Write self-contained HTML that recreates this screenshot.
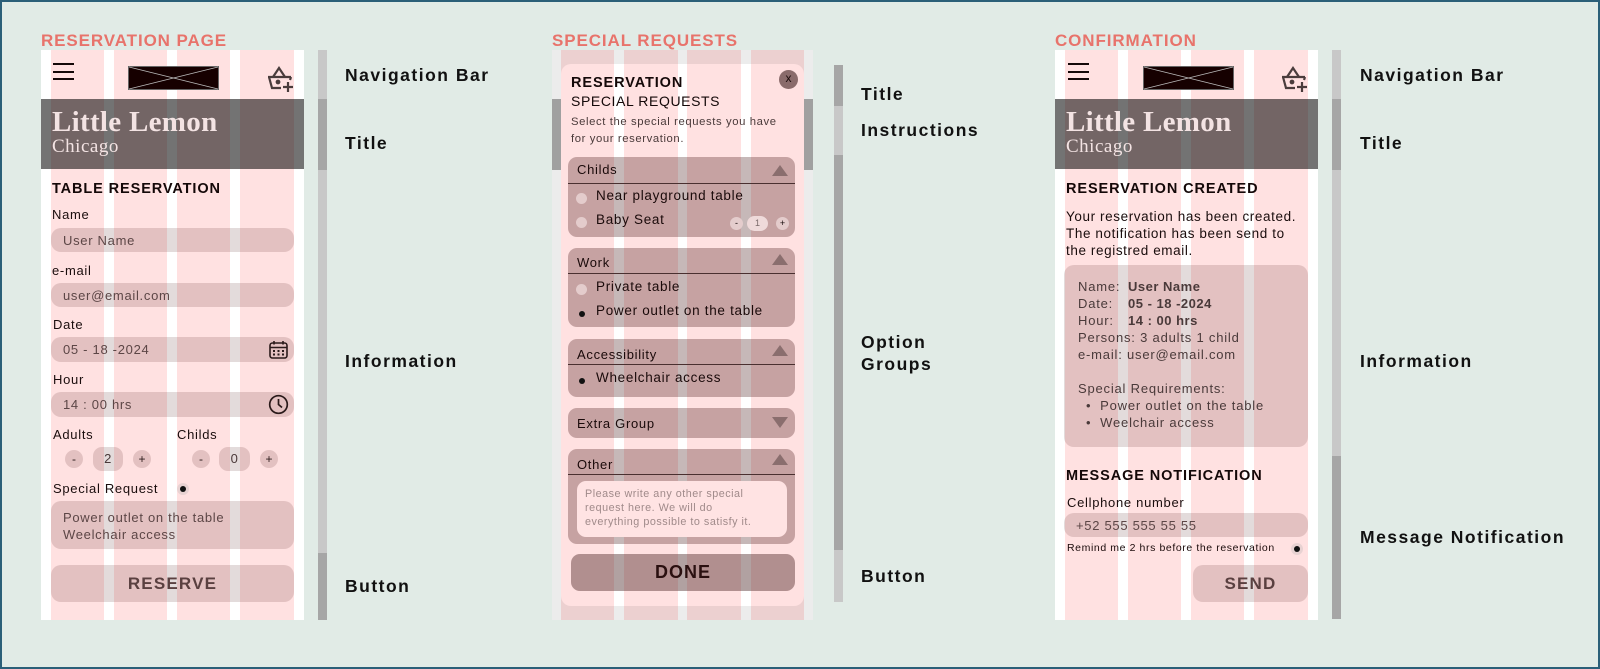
<!DOCTYPE html>
<html><head><meta charset="utf-8"><style>
*{margin:0;padding:0;box-sizing:border-box}
body{width:1600px;height:669px;overflow:hidden;background:#e1ebe6;font-family:"Liberation Sans",sans-serif;position:relative;color:#140808;letter-spacing:0.5px}
.a{position:absolute;white-space:nowrap;line-height:1}
.bd{position:absolute;left:0;top:0;width:1600px;height:669px;border:2px solid #2b5f78;}
.sec{color:#e8736b;font-weight:bold;font-size:17px;letter-spacing:0.9px}
.lab{font-weight:bold;font-size:17.5px;color:#111;letter-spacing:1.5px}
.fr{position:absolute;background:linear-gradient(90deg,#fff 0 10px,#ffe1e1 10px 63px,#fff 63px 73px,#ffe1e1 73px 126px,#fff 126px 136px,#ffe1e1 136px 189px,#fff 189px 199px,#ffe1e1 199px 253px,#fff 253px 263px)}
.hb{position:absolute;width:21px;height:2px;background:#140808}
.hdr{position:absolute;height:70px;background:rgba(0,0,0,0.55)}
.ll{font-family:"Liberation Serif",serif;font-size:29px;font-weight:bold;color:#f3e3e3;letter-spacing:0.3px}
.ch{font-family:"Liberation Serif",serif;font-size:19px;color:#f3e3e3}
.h2{font-weight:bold;font-size:14.5px;color:#140808;letter-spacing:0.9px}
.t13{font-size:13px;color:#1a0d0d;letter-spacing:0.7px}
.in{position:absolute;background:rgba(60,0,0,0.14);border-radius:10px;font-size:13px;color:#5c4646;padding-left:12px;display:flex;align-items:center;letter-spacing:0.7px}
.cb{position:absolute;width:18px;height:18px;border-radius:50%;background:rgba(60,0,0,0.14);font-size:12px;text-align:center;line-height:18px;color:#2a1a1a;letter-spacing:0}
.pill{position:absolute;height:24px;border-radius:9px;background:rgba(60,0,0,0.14);font-size:13px;text-align:center;line-height:24px;color:#4a3a3a}
.sb{position:absolute;width:9px}
.grp{position:absolute;left:568px;width:227px;background:rgba(50,0,0,0.28);border-radius:9px}
.gh{position:absolute;left:9px;font-size:13px;color:#1a0a0a;letter-spacing:0.7px}
.gl{position:absolute;left:0;right:0;height:1px;background:#4a3030}
.tri{position:absolute;right:7px;width:0;height:0;border-left:8px solid transparent;border-right:8px solid transparent}
.up{border-bottom:11px solid #8a6e6e}
.dn{border-top:11px solid #8a6e6e}
.rd{position:absolute;width:11px;height:11px;border-radius:50%;background:#e4cccc}
.opt{position:absolute;font-size:13.5px;color:#1a0a0a;letter-spacing:0.7px}
</style></head><body>
<div class="bd"></div>

<!-- ===== Frame 1 ===== -->
<div class="a sec" style="left:41px;top:32px">RESERVATION PAGE</div>
<div class="fr" style="left:41px;top:50px;width:263px;height:570px"></div>
<div class="hb" style="left:53px;top:63px"></div><div class="hb" style="left:53px;top:71px"></div><div class="hb" style="left:53px;top:78px"></div>
<svg class="a" style="left:128px;top:66px" width="91" height="24"><rect x="0.5" y="0.5" width="90" height="23" fill="#160000" stroke="#666"/><line x1="1" y1="1" x2="90" y2="23" stroke="#bbb" stroke-width="0.8"/><line x1="90" y1="1" x2="1" y2="23" stroke="#bbb" stroke-width="0.8"/></svg>
<svg class="a" style="left:266px;top:66px" width="28" height="27" viewBox="0 0 28 27" fill="none" stroke="#4a3c3c" stroke-width="2.2"><path d="M7 11 L13 2 L19 11"/><path d="M2 11 H25 M3 11 L6 22 H15"/><path d="M25 11 L24 14"/><circle cx="12" cy="16" r="1.3" fill="#4a3c3c"/><path d="M22 16 V26 M17 21 H27"/></svg>
<div class="hdr" style="left:41px;top:99px;width:263px"></div>
<div class="a ll" style="left:52px;top:108px">Little Lemon</div>
<div class="a ch" style="left:52px;top:137px">Chicago</div>
<div class="a h2" style="left:52px;top:182px">TABLE RESERVATION</div>
<div class="a t13" style="left:52px;top:208px">Name</div>
<div class="in" style="left:51px;top:228px;width:243px;height:24px">User Name</div>
<div class="a t13" style="left:52px;top:264px">e-mail</div>
<div class="in" style="left:51px;top:283px;width:243px;height:24px">user@email.com</div>
<div class="a t13" style="left:53px;top:318px">Date</div>
<div class="in" style="left:51px;top:337px;width:243px;height:25px">05 - 18 -2024</div>
<svg class="a" style="left:269px;top:340px" width="19" height="19" viewBox="0 0 19 19" fill="none" stroke="#2a1a1a" stroke-width="1.6"><rect x="1" y="3" width="17" height="15" rx="2.5"/><path d="M1 7.5 H18 M5 1 V4.5 M14 1 V4.5"/><g fill="#2a1a1a" stroke="none"><rect x="4" y="10" width="2" height="2"/><rect x="8.5" y="10" width="2" height="2"/><rect x="13" y="10" width="2" height="2"/><rect x="4" y="13.5" width="2" height="2"/><rect x="8.5" y="13.5" width="2" height="2"/><rect x="13" y="13.5" width="2" height="2"/></g></svg>
<div class="a t13" style="left:53px;top:373px">Hour</div>
<div class="in" style="left:51px;top:392px;width:243px;height:25px">14 : 00 hrs</div>
<svg class="a" style="left:268px;top:394px" width="21" height="21" viewBox="0 0 21 21" fill="none" stroke="#2a1a1a" stroke-width="1.7"><circle cx="10.5" cy="10.5" r="8.8"/><path d="M10.5 5 V10.5 L14 13.5"/></svg>
<div class="a t13" style="left:53px;top:428px">Adults</div>
<div class="a t13" style="left:177px;top:428px">Childs</div>
<div class="cb" style="left:65px;top:450px">-</div>
<div class="pill" style="left:93px;top:447px;width:30px">2</div>
<div class="cb" style="left:133px;top:450px">+</div>
<div class="cb" style="left:192px;top:450px">-</div>
<div class="pill" style="left:219px;top:447px;width:31px">0</div>
<div class="cb" style="left:260px;top:450px">+</div>
<div class="a t13" style="left:53px;top:482px">Special Request</div>
<div class="a" style="left:177px;top:483px;width:12px;height:12px;border-radius:50%;background:#e8d2d2"></div>
<div class="a" style="left:180px;top:486px;width:6px;height:6px;border-radius:50%;background:#111"></div>
<div class="in" style="left:51px;top:501px;width:243px;height:48px;display:block;padding-top:8px;line-height:17px">Power outlet on the table<br>Weelchair access</div>
<div class="in" style="left:51px;top:565px;width:243px;height:37px;justify-content:center;padding:0;font-weight:bold;font-size:17px;color:#5a4040;letter-spacing:1.2px">RESERVE</div>

<div class="sb" style="left:318px;top:50px;height:49px;background:#c8c8c8"></div>
<div class="sb" style="left:318px;top:99px;height:71px;background:#a6a6a6"></div>
<div class="sb" style="left:318px;top:170px;height:383px;background:#c8c8c8"></div>
<div class="sb" style="left:318px;top:553px;height:67px;background:#a6a6a6"></div>
<div class="a lab" style="left:345px;top:67px">Navigation Bar</div>
<div class="a lab" style="left:345px;top:135px">Title</div>
<div class="a lab" style="left:345px;top:353px">Information</div>
<div class="a lab" style="left:345px;top:578px">Button</div>

<!-- ===== Frame 2 ===== -->
<div class="a sec" style="left:552px;top:32px">SPECIAL REQUESTS</div>
<div class="fr" style="left:552px;top:50px;width:261px;height:570px;background:linear-gradient(90deg,#fff 0 9px,#ffe1e1 9px 62px,#fff 62px 72px,#ffe1e1 72px 126px,#fff 126px 135px,#ffe1e1 135px 189px,#fff 189px 199px,#ffe1e1 199px 252px,#fff 252px 261px)"></div>
<div class="a" style="left:552px;top:50px;width:261px;height:570px;background:rgba(0,0,0,0.075)"></div>
<div class="sb" style="left:552px;top:99px;height:71px;background:#a0a0a0"></div>
<div class="sb" style="left:804px;top:99px;height:71px;background:#a0a0a0"></div>
<div class="a" style="left:561px;top:64px;width:243px;height:542px;border-radius:10px;background:linear-gradient(90deg,#ffe1e1 0 53px,#fff 53px 63px,#ffe1e1 63px 117px,#fff 117px 126px,#ffe1e1 126px 180px,#fff 180px 190px,#ffe1e1 190px 243px)"></div>
<div class="a h2" style="left:571px;top:76px">RESERVATION</div>
<div class="a" style="left:571px;top:94px;font-size:14px;color:#140808;letter-spacing:0.6px">SPECIAL REQUESTS</div>
<div class="a" style="left:571px;top:117px;font-size:11.3px;color:#4a3a3a;letter-spacing:0.6px">Select the special requests you have</div>
<div class="a" style="left:571px;top:134px;font-size:11.3px;color:#4a3a3a;letter-spacing:0.6px">for your reservation.</div>
<div class="a" style="left:779px;top:70px;width:19px;height:19px;border-radius:50%;background:#8a6b6b;color:#1a0a0a;font-size:12px;text-align:center;line-height:17px;letter-spacing:0">x</div>

<div class="grp" style="top:157px;height:80px"><div class="gh" style="top:5px">Childs</div><div class="gl" style="top:26px"></div><div class="tri up" style="top:8px"></div></div>
<div class="rd" style="left:576px;top:193px"></div><div class="opt" style="left:596px;top:188px">Near playground table</div>
<div class="rd" style="left:576px;top:217px"></div><div class="opt" style="left:596px;top:212px">Baby Seat</div>
<div class="a" style="left:730px;top:217px;width:13px;height:13px;border-radius:50%;background:#e4cccc;font-size:9px;text-align:center;line-height:12px;letter-spacing:0">-</div>
<div class="a" style="left:747px;top:216px;width:21px;height:15px;border-radius:8px;background:#efdada;font-size:9px;text-align:center;line-height:15px;color:#7a6a6a;letter-spacing:0">1</div>
<div class="a" style="left:776px;top:217px;width:13px;height:13px;border-radius:50%;background:#e4cccc;font-size:9px;text-align:center;line-height:12px;letter-spacing:0">+</div>

<div class="grp" style="top:248px;height:79px"><div class="gh" style="top:7px">Work</div><div class="gl" style="top:25px"></div><div class="tri up" style="top:6px"></div></div>
<div class="rd" style="left:576px;top:284px"></div><div class="opt" style="left:596px;top:279px">Private table</div>
<div class="a" style="left:579px;top:311px;width:6px;height:6px;border-radius:50%;background:#111"></div><div class="opt" style="left:596px;top:303px">Power outlet on the table</div>

<div class="grp" style="top:339px;height:58px"><div class="gh" style="top:8px">Accessibility</div><div class="gl" style="top:25px"></div><div class="tri up" style="top:6px"></div></div>
<div class="a" style="left:579px;top:378px;width:6px;height:6px;border-radius:50%;background:#111"></div><div class="opt" style="left:596px;top:370px">Wheelchair access</div>

<div class="grp" style="top:408px;height:30px"><div class="gh" style="top:8px">Extra Group</div><div class="tri dn" style="top:9px"></div></div>

<div class="grp" style="top:449px;height:95px"><div class="gh" style="top:8px">Other</div><div class="gl" style="top:25px"></div><div class="tri up" style="top:5px"></div>
<div class="a" style="left:9px;top:32px;width:210px;height:56px;border-radius:9px;background:#ffe3e3"></div></div>
<div class="a" style="left:585px;top:487px;font-size:10.8px;color:#a08a8a;line-height:14px;white-space:normal;width:205px;letter-spacing:0.5px">Please write any other special<br>request here. We will do<br>everything possible to satisfy it.</div>
<div class="a" style="left:571px;top:554px;width:224px;height:37px;border-radius:9px;background:rgba(60,20,20,0.4);font-weight:bold;font-size:18px;color:#2a1010;text-align:center;line-height:37px;letter-spacing:1px">DONE</div>

<div class="sb" style="left:834px;top:65px;height:41px;background:#a6a6a6"></div>
<div class="sb" style="left:834px;top:106px;height:49px;background:#c8c8c8"></div>
<div class="sb" style="left:834px;top:155px;height:395px;background:#a6a6a6"></div>
<div class="sb" style="left:834px;top:550px;height:52px;background:#c8c8c8"></div>
<div class="a lab" style="left:861px;top:86px">Title</div>
<div class="a lab" style="left:861px;top:122px">Instructions</div>
<div class="a lab" style="left:861px;top:334px">Option</div>
<div class="a lab" style="left:861px;top:356px">Groups</div>
<div class="a lab" style="left:861px;top:568px">Button</div>

<!-- ===== Frame 3 ===== -->
<div class="a sec" style="left:1055px;top:32px">CONFIRMATION</div>
<div class="fr" style="left:1055px;top:50px;width:263px;height:570px"></div>
<div class="hb" style="left:1068px;top:63px"></div><div class="hb" style="left:1068px;top:71px"></div><div class="hb" style="left:1068px;top:78px"></div>
<svg class="a" style="left:1143px;top:66px" width="91" height="24"><rect x="0.5" y="0.5" width="90" height="23" fill="#160000" stroke="#666"/><line x1="1" y1="1" x2="90" y2="23" stroke="#bbb" stroke-width="0.8"/><line x1="90" y1="1" x2="1" y2="23" stroke="#bbb" stroke-width="0.8"/></svg>
<svg class="a" style="left:1280px;top:66px" width="28" height="27" viewBox="0 0 28 27" fill="none" stroke="#4a3c3c" stroke-width="2.2"><path d="M7 11 L13 2 L19 11"/><path d="M2 11 H25 M3 11 L6 22 H15"/><path d="M25 11 L24 14"/><circle cx="12" cy="16" r="1.3" fill="#4a3c3c"/><path d="M22 16 V26 M17 21 H27"/></svg>
<div class="hdr" style="left:1055px;top:99px;width:263px"></div>
<div class="a ll" style="left:1066px;top:108px">Little Lemon</div>
<div class="a ch" style="left:1066px;top:137px">Chicago</div>
<div class="a h2" style="left:1066px;top:182px">RESERVATION CREATED</div>
<div class="a t13" style="left:1066px;top:208px;font-size:13.5px;line-height:17px;letter-spacing:0.6px">Your reservation has been created.<br>The notification has been send to<br>the registred email.</div>
<div class="a" style="left:1064px;top:265px;width:244px;height:182px;border-radius:10px;background:rgba(60,0,0,0.14)"></div>
<div class="a" style="left:1078px;top:278px;font-size:13px;color:#4a3a3a;line-height:17px;letter-spacing:0.8px">Name:<br>Date:<br>Hour:<br>Persons: 3 adults 1 child<br>e-mail: user@email.com<br><br>Special Requirements:</div>
<div class="a" style="left:1128px;top:278px;font-size:13px;color:#4a3a3a;line-height:17px;font-weight:bold;letter-spacing:0.5px">User Name<br>05 - 18 -2024<br>14 : 00 hrs</div>
<div class="a" style="left:1086px;top:397px;font-size:13px;color:#4a3a3a;line-height:17px;letter-spacing:0.8px">•&nbsp;&nbsp;Power outlet on the table<br>•&nbsp;&nbsp;Weelchair access</div>
<div class="a h2" style="left:1066px;top:469px">MESSAGE NOTIFICATION</div>
<div class="a t13" style="left:1067px;top:496px">Cellphone number</div>
<div class="in" style="left:1064px;top:513px;width:244px;height:24px">+52 555 555 55 55</div>
<div class="a" style="left:1067px;top:543px;font-size:10.5px;color:#1a0a0a;letter-spacing:0.6px">Remind me 2 hrs before the reservation</div>
<div class="a" style="left:1291px;top:543px;width:12px;height:12px;border-radius:50%;background:#e8d2d2"></div>
<div class="a" style="left:1294px;top:546px;width:6px;height:6px;border-radius:50%;background:#111"></div>
<div class="in" style="left:1193px;top:565px;width:115px;height:37px;justify-content:center;padding:0;font-weight:bold;font-size:17px;color:#5a4040;letter-spacing:1.2px">SEND</div>

<div class="sb" style="left:1332px;top:50px;height:49px;background:#c8c8c8"></div>
<div class="sb" style="left:1332px;top:99px;height:71px;background:#a6a6a6"></div>
<div class="sb" style="left:1332px;top:170px;height:286px;background:#c8c8c8"></div>
<div class="sb" style="left:1332px;top:456px;height:163px;background:#a6a6a6"></div>
<div class="a lab" style="left:1360px;top:67px">Navigation Bar</div>
<div class="a lab" style="left:1360px;top:135px">Title</div>
<div class="a lab" style="left:1360px;top:353px">Information</div>
<div class="a lab" style="left:1360px;top:529px">Message Notification</div>
</body></html>
